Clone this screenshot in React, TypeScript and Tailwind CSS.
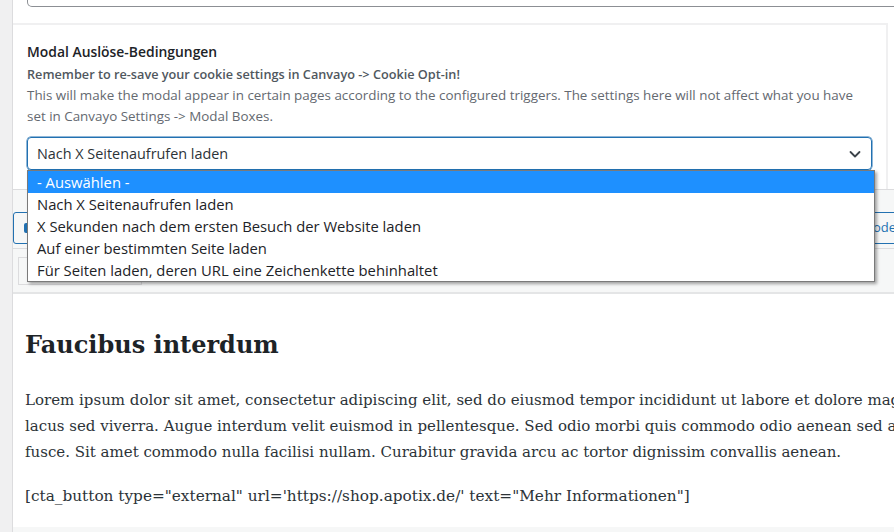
import React from "react";

const options = [
  "- Auswählen -",
  "Nach X Seitenaufrufen laden",
  "X Sekunden nach dem ersten Besuch der Website laden",
  "Auf einer bestimmten Seite laden",
  "Für Seiten laden, deren URL eine Zeichenkette behinhaltet",
];

const sans = { fontFamily: '"Open Sans", "Noto Sans", sans-serif' };

function Chevron() {
  return (
    <svg width="14" height="14" viewBox="0 0 14 14" fill="none">
      <path d="M2.5 5 L7 9.5 L11.5 5" stroke="#3c434a" strokeWidth="1.8" strokeLinecap="round" strokeLinejoin="round" />
    </svg>
  );
}

export default function App() {
  return (
    <div className="relative w-[894px] h-[532px] overflow-hidden bg-white flex" style={sans}>
      <div className="w-[13px] shrink-0 bg-[#f0f0f1] border-r border-[#dcdcde]" />

      <div className="flex-1 flex flex-col min-w-0">
        {/* bottom edge of the field above */}
        <div className="h-[23px] shrink-0">
          <div className="ml-[14px] -mr-[30px] h-[7px] border-x border-b border-[#8c8f94] rounded-b-[5px]" />
        </div>

        {/* settings box */}
        <div className="shrink-0 border-t-2 border-r-2 border-[#f0f0f1] mr-[6px] px-[14px] pt-[16px] pb-[19px] text-[13px] leading-[21px]">
          <div className="font-semibold text-[13.9px] text-[#1d2327] mb-[2px]">Modal Auslöse-Bedingungen</div>
          <div className="font-semibold text-[12.7px] text-[#50575e]">Remember to re-save your cookie settings in Canvayo -&gt; Cookie Opt-in!</div>
          <div className="text-[13.4px] text-[#646970]">
            This will make the modal appear in certain pages according to the configured triggers. The settings here will not affect what you have
            <br />
            set in Canvayo Settings -&gt; Modal Boxes.
          </div>
          <div className="mt-[10px] h-[33px] border border-[#2271b1] rounded-[4px] flex items-center justify-between pl-[9px] pr-[9px] text-[14.4px] text-[#2c3338] shadow-[0_0_0_0.5px_#2271b1]">
            <span>Nach X Seitenaufrufen laden</span>
            <Chevron />
          </div>
        </div>

        {/* media buttons */}
        <div className="h-[59px] shrink-0 bg-[#f6f7f7] border-t border-[#dcdcde] flex items-end justify-between pb-[4px]">
          <div className="h-[32px] w-[120px] border border-[#2271b1] rounded-[3px] bg-[#f6f7f7] flex items-center gap-2 pl-[10px] text-[13px] text-[#2271b1]">
            <span className="w-[10px] h-[10px] bg-[#2271b1] rounded-[2px]" />
            Dateien hinzufügen
          </div>
          <div className="h-[32px] border border-[#2271b1] rounded-[3px] bg-[#f6f7f7] flex items-center pl-[10px] pr-[12px] -mr-[15px] text-[13px] text-[#2271b1]">
            Shortcode
          </div>
        </div>

        {/* editor toolbar */}
        <div className="h-[46px] shrink-0 bg-[#f6f7f7] border-t border-[#dcdcde] border-b-2 border-b-[#e4e5e6] flex items-center pl-[5px]">
          <div className="w-[124px] h-[28px] bg-[#f6f7f7] border border-[#dcdcde]" />
        </div>

        {/* editor content */}
        <div className="flex-1 bg-white pl-[12px] pt-[33px] text-[#2c3338] whitespace-nowrap overflow-hidden" style={{ fontFamily: '"DejaVu Serif", "Liberation Serif", serif' }}>
          <div className="text-[24px] font-bold leading-[36px] text-[#1d2327]">Faucibus interdum</div>
          <div className="mt-[24px] text-[15px] leading-[26px]">
            <div>Lorem ipsum dolor sit amet, consectetur adipiscing elit, sed do eiusmod tempor incididunt ut labore et dolore magna aliqua.</div>
            <div>lacus sed viverra. Augue interdum velit euismod in pellentesque. Sed odio morbi quis commodo odio aenean sed adipiscing.</div>
            <div>fusce. Sit amet commodo nulla facilisi nullam. Curabitur gravida arcu ac tortor dignissim convallis aenean.</div>
          </div>
          <div className="mt-[18px] text-[15.3px] leading-[26px]">[cta_button type="external" url='https://shop.apotix.de/' text="Mehr Informationen"]</div>
        </div>
        <div className="h-[5px] shrink-0 bg-[#f6f7f7]" />
      </div>

      {/* open select list */}
      <div className="absolute left-[27px] top-[170px] w-[848px] bg-white border border-[#7a7a7a] shadow-[2px_2px_3px_rgba(0,0,0,0.35)] text-[14.8px] text-[#1d2327]">
        {options.map((o, i) => (
          <div
            key={o}
            className={`h-[22px] leading-[22px] pl-[9px] ${i === 0 ? "bg-[#1e90ff] text-white" : ""}`}
          >
            {o}
          </div>
        ))}
      </div>
    </div>
  );
}
